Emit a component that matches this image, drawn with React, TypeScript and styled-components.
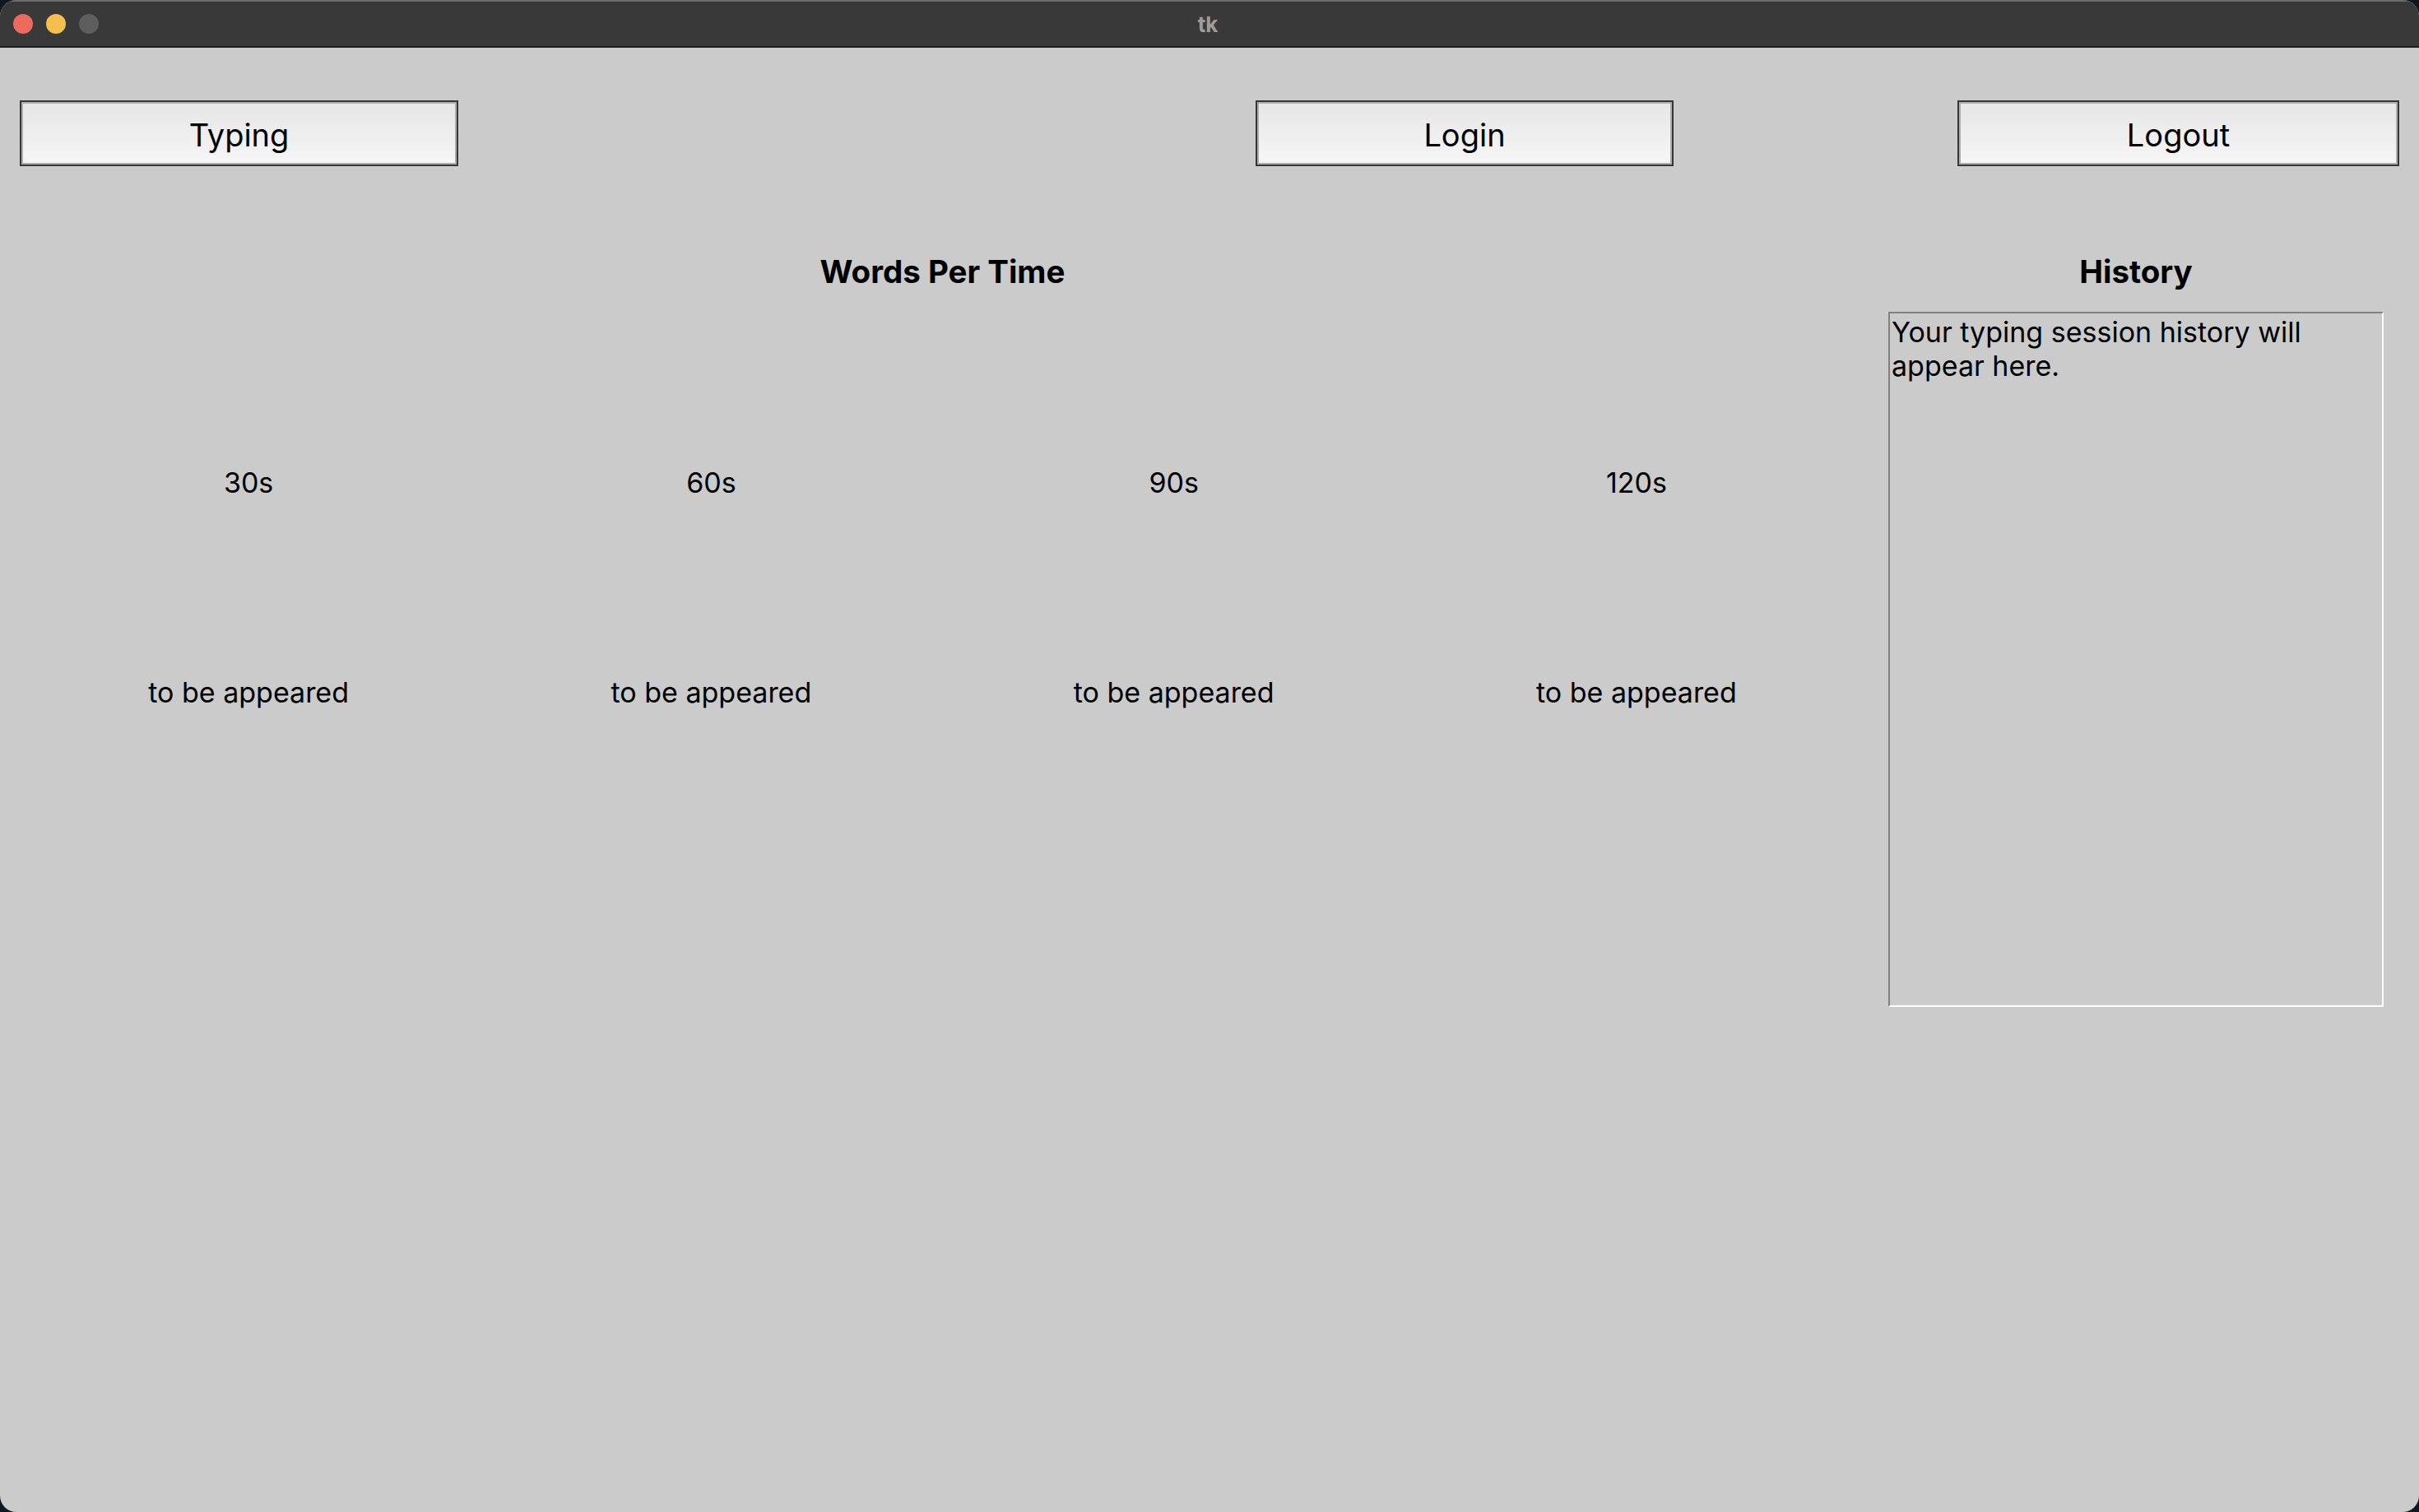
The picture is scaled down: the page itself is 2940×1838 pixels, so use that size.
import React from "react";
import styled, { createGlobalStyle } from "styled-components";

const Global = createGlobalStyle`
  html, body { margin: 0; padding: 0; background: #0f1822; }
  body { font-family: Inter, "Noto Sans", sans-serif; }
  #root { width: 2940px; height: 1838px; }
`;

const Window = styled.div`
  width: 2940px;
  height: 1838px;
  box-sizing: border-box;
  border-radius: 20px;
  overflow: hidden;
  background: #cbcbcb;
  display: flex;
  flex-direction: column;
`;

const TitleBar = styled.div`
  height: 58px;
  flex: none;
  box-sizing: border-box;
  background: #383938;
  border-top: 2px solid #6b6d6c;
  border-bottom: 2px solid #1c1c1c;
  display: grid;
  grid-template-columns: 1fr auto 1fr;
  align-items: center;
`;

const Lights = styled.div`
  display: flex;
  gap: 16px;
  padding-left: 16px;
`;

const Light = styled.span<{ $color: string }>`
  width: 24px;
  height: 24px;
  border-radius: 50%;
  background: ${(p) => p.$color};
`;

const Title = styled.div`
  font-family: Inter, "Noto Sans", sans-serif;
  font-weight: 700;
  font-size: 26px;
  color: #9d9d9d;
  margin-left: -4px;
`;

const TopBar = styled.div`
  display: grid;
  grid-template-columns: 533px 1fr 508px 345px 537px;
  padding: 64px 24px 0;
`;

const Button = styled.button<{ $col: number }>`
  grid-column: ${(p) => p.$col};
  height: 80px;
  box-sizing: border-box;
  border: 2px solid #363636;
  box-shadow: inset 0 0 0 2px #aeaeae;
  background: linear-gradient(#e6e6e6, #f6f6f6);
  font-family: Inter, "Noto Sans", sans-serif;
  font-size: 38px;
  color: #000;
  padding: 3px 0 0;
  margin: 0;
`;

const Main = styled.div`
  display: grid;
  grid-template-columns: 2249px 652px;
  padding: 104px 0 0 21px;
`;

const ScoresPanel = styled.div`
  display: flex;
  flex-direction: column;
`;

const Heading = styled.div`
  font-family: Inter, "Noto Sans", sans-serif;
  font-weight: 700;
  font-size: 38.5px;
  line-height: 48px;
  text-align: center;
  color: #000;
`;

const ScoreGrid = styled.div`
  display: grid;
  grid-template-columns: repeat(4, 1fr);
  grid-template-rows: 48px 48px;
  row-gap: 207px;
  margin-top: 209px;
`;

const Cell = styled.div`
  font-family: Inter, "Noto Sans", sans-serif;
  font-size: 34px;
  line-height: 48px;
  text-align: center;
  color: #000;
`;

const HistoryPanel = styled.div`
  display: flex;
  flex-direction: column;
  padding: 0 25px;
`;

const HistoryBox = styled.div`
  margin-top: 25px;
  height: 845px;
  box-sizing: border-box;
  border-top: 2px solid #808080;
  border-left: 2px solid #808080;
  border-bottom: 2px solid #ffffff;
  border-right: 2px solid #ffffff;
  padding: 2px 2px;
  font-family: Inter, "Noto Sans", sans-serif;
  font-size: 34px;
  line-height: 41px;
  color: #000;
`;

const scores = ["30s", "60s", "90s", "120s"];

export default function App() {
  return (
    <>
      <Global />
      <Window>
        <TitleBar>
          <Lights>
            <Light $color="#ed6a5e" />
            <Light $color="#f5bf4f" />
            <Light $color="#5d5e5d" />
          </Lights>
          <Title>tk</Title>
          <div />
        </TitleBar>
        <TopBar>
          <Button $col={1}>Typing</Button>
          <Button $col={3}>Login</Button>
          <Button $col={5}>Logout</Button>
        </TopBar>
        <Main>
          <ScoresPanel>
            <Heading>Words Per Time</Heading>
            <ScoreGrid>
              {scores.map((s) => (
                <Cell key={s}>{s}</Cell>
              ))}
              {scores.map((s) => (
                <Cell key={s + "v"}>to be appeared</Cell>
              ))}
            </ScoreGrid>
          </ScoresPanel>
          <HistoryPanel>
            <Heading>History</Heading>
            <HistoryBox>
              Your typing session history will
              <br />
              appear here.
            </HistoryBox>
          </HistoryPanel>
        </Main>
      </Window>
    </>
  );
}
